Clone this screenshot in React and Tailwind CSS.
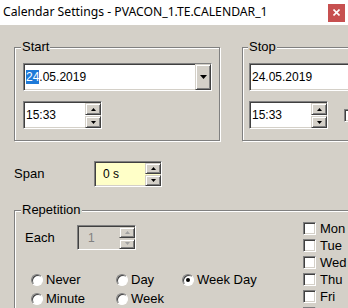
import React from "react";

const sunken =
  "border border-t-[#808080] border-l-[#808080] border-b-white border-r-white shadow-[inset_1px_1px_0_#404040,inset_-1px_-1px_0_#d4d0c8]";
const raised =
  "border border-t-[#d4d0c8] border-l-[#d4d0c8] border-b-[#404040] border-r-[#404040] shadow-[inset_1px_1px_0_white,inset_-1px_-1px_0_#808080] bg-[#d4d0c8]";

function Tri({ up, w = 5, h = 3, color = "#000" }) {
  const pts = up ? `${w / 2},0 ${w},${h} 0,${h}` : `0,0 ${w},0 ${w / 2},${h}`;
  return (
    <svg width={w} height={h} viewBox={`0 0 ${w} ${h}`} className="block">
      <polygon points={pts} fill={color} />
    </svg>
  );
}

function SpinButtons({ disabled }) {
  const c = disabled ? "#a0a0a0" : "#000";
  return (
    <div className="flex flex-col w-[16px] gap-[1px] pt-[1px] shrink-0">
      <div className={`${raised} flex-1 flex items-center justify-center`}>
        <Tri up color={c} />
      </div>
      <div className={`${raised} flex-1 flex items-center justify-center`}>
        <Tri color={c} />
      </div>
    </div>
  );
}

function Spin({ value, w, h, bg = "bg-white", text = "text-black", pl = "pl-[2px]", disabled }) {
  return (
    <div className={`${sunken} ${bg} flex shrink-0`} style={{ width: w, height: h }}>
      <div className={`flex-1 flex items-center ${pl} text-[12px] ${text}`}>{value}</div>
      <SpinButtons disabled={disabled} />
    </div>
  );
}

function DateCombo({ highlight }) {
  return (
    <div className={`${sunken} bg-white flex w-[189px] h-[28px] shrink-0`}>
      <div className="flex-1 flex items-center pl-[2px] text-[12px] text-black">
        {highlight ? (
          <>
            <span className="bg-[#1e7ad8] text-white leading-[14px]">24</span>
            <span>.05.2019</span>
          </>
        ) : (
          <span>24.05.2019</span>
        )}
      </div>
      <div className={`${raised} w-[16px] flex items-center justify-center`}>
        <Tri w={7} h={4} />
      </div>
    </div>
  );
}

function Check({ label }) {
  return (
    <div className="h-[17px] flex items-center gap-[4px]">
      <div className={`${sunken} bg-white w-[13px] h-[13px] shrink-0`} />
      <span className="text-[13px] text-black leading-none">{label}</span>
    </div>
  );
}

function Radio({ label, checked }) {
  return (
    <div className="h-[19px] flex items-center gap-[3px]">
      <div className="w-[12px] h-[12px] rounded-full bg-white border border-t-[#808080] border-l-[#808080] border-b-white border-r-white shadow-[inset_1px_1px_0_#404040] flex items-center justify-center shrink-0">
        {checked && <div className="w-[4px] h-[4px] rounded-full bg-black" />}
      </div>
      <span className="text-[13px] text-black leading-none">{label}</span>
    </div>
  );
}

const groupCls =
  "border border-[#808080] shadow-[inset_1px_1px_0_white,1px_1px_0_white] m-0 min-w-0 shrink-0";
const legendCls = "px-[1px] text-[13px] leading-[14px] text-black bg-[#d4d0c8]";

export default function App() {
  return (
    <div className="w-[348px] h-[308px] overflow-hidden bg-[#d4d0c8] flex flex-col font-['Liberation_Sans',Arial,sans-serif]">
      <div className="h-[25px] bg-white flex items-center shrink-0 pl-[3px]">
        <span className="flex-1 text-[12.2px] text-black font-['Noto_Sans',sans-serif] whitespace-nowrap">
          Calendar Settings - PVACON_1.TE.CALENDAR_1
        </span>
        <div className="w-[17px] h-[18px] bg-[#c75050] mr-[3px] flex items-center justify-center">
          <svg width="7" height="7" viewBox="0 0 7 7">
            <path d="M0.5 0.5 L6.5 6.5 M6.5 0.5 L0.5 6.5" stroke="white" strokeWidth="1.6" />
          </svg>
        </div>
      </div>

      <div className="flex flex-col pl-[14px] pt-[15px]">
        <div className="flex gap-[22px]">
          <fieldset className={`${groupCls} w-[206px] pl-[8px] pr-[6px] pt-[9px] pb-[11px]`}>
            <legend className={`${legendCls} ml-[-2px]`}>Start</legend>
            <DateCombo highlight />
            <div className="mt-[10px]">
              <Spin value="15:33" w={79} h={28} />
            </div>
          </fieldset>
          <fieldset className={`${groupCls} w-[206px] pl-[6px] pr-[6px] pt-[9px] pb-[11px]`}>
            <legend className={`${legendCls} ml-[-1px]`}>Stop</legend>
            <DateCombo />
            <div className="mt-[10px] flex items-center gap-[16px]">
              <Spin value="15:33" w={79} h={28} />
              <div className={`${sunken} bg-white w-[13px] h-[13px] shrink-0`} />
            </div>
          </fieldset>
        </div>

        <div className="mt-[20px] flex items-center">
          <span className="w-[80px] text-[13px] text-black">Span</span>
          <Spin value="0 s" w={68} h={26} bg="bg-[#ffffc8]" pl="pl-[8px]" />
        </div>

        <fieldset className={`${groupCls} mt-[16px] w-[400px] pl-[10px] pt-[3px] pb-[10px]`}>
          <legend className={`${legendCls} ml-[-4px]`}>Repetition</legend>
          <div className="flex">
            <div className="w-[278px] flex flex-col pt-[5px]">
              <div className="flex items-center">
                <span className="w-[52px] text-[13px] text-black">Each</span>
                <Spin value="1" w={59} h={25} bg="bg-[#d4d0c8]" text="text-[#808080]" pl="pl-[10px]" disabled />
              </div>
              <div className="mt-[20px] ml-[6px] grid grid-cols-[85px_66px_auto]">
                <Radio label="Never" />
                <Radio label="Day" />
                <Radio label="Week Day" checked />
                <Radio label="Minute" />
                <Radio label="Week" />
              </div>
            </div>
            <div className="flex flex-col">
              <Check label="Mon" />
              <Check label="Tue" />
              <Check label="Wed" />
              <Check label="Thu" />
              <Check label="Fri" />
              <Check label="Sat" />
            </div>
          </div>
        </fieldset>
      </div>
    </div>
  );
}
